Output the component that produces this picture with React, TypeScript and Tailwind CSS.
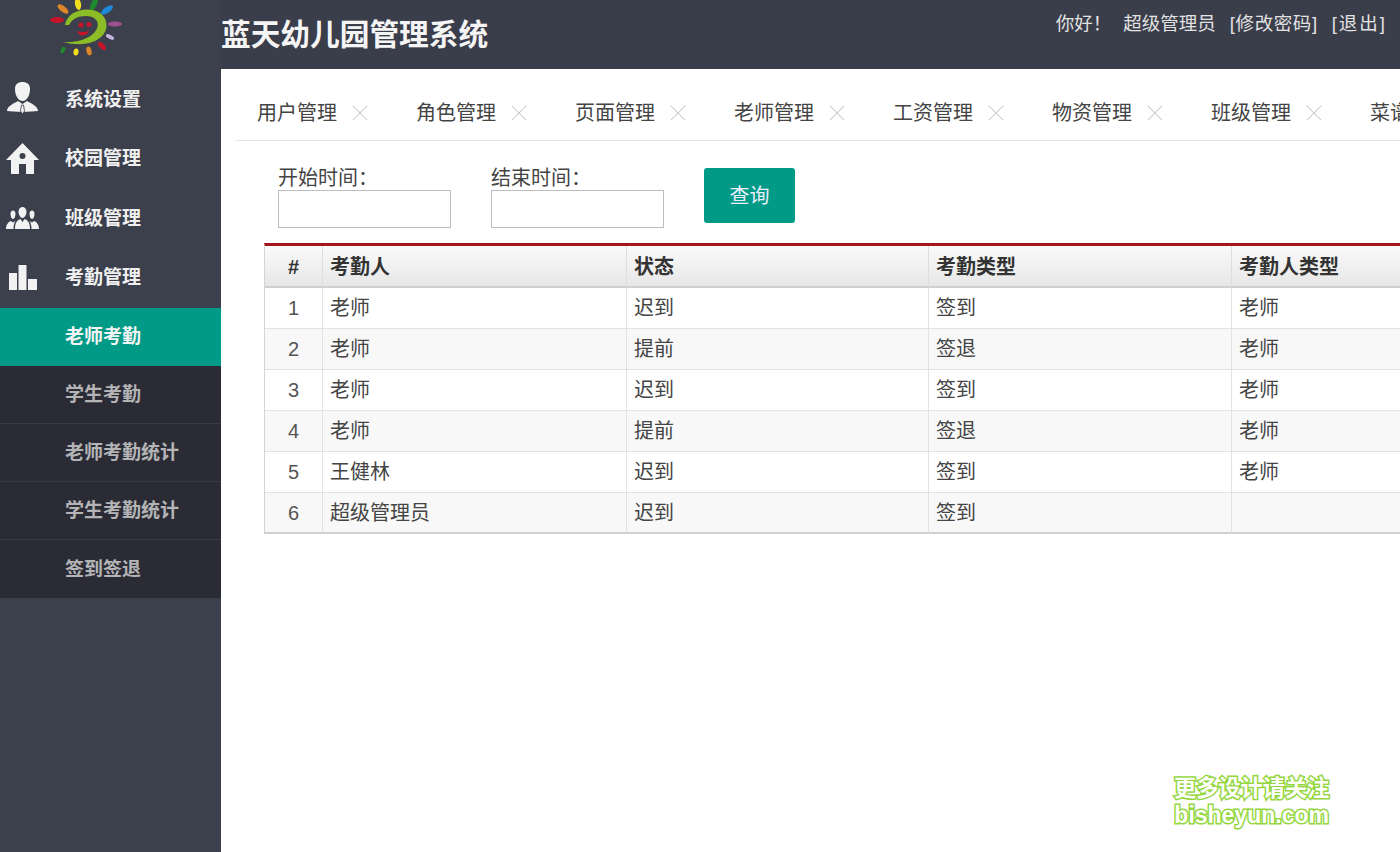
import { X } from "lucide-react";

const font = "font-['Liberation_Sans','Noto_Sans_CJK_SC',sans-serif]";

function Logo() {
  const petals = [
    { cx: 78, cy: 4, rx: 3, ry: 6, rot: -10, fill: "#f2dc1e" },
    { cx: 94, cy: 4, rx: 3, ry: 7, rot: 25, fill: "#1f8a2d" },
    { cx: 107, cy: 10, rx: 3, ry: 7, rot: 55, fill: "#1e88d6" },
    { cx: 115, cy: 24, rx: 7, ry: 2.5, rot: 0, fill: "#a0508c" },
    { cx: 110, cy: 37, rx: 4.5, ry: 2, rot: 28, fill: "#c4b5dc" },
    { cx: 102, cy: 46, rx: 5, ry: 2.5, rot: 48, fill: "#c8142a" },
    { cx: 89, cy: 51, rx: 2.5, ry: 4.5, rot: -15, fill: "#e0862a" },
    { cx: 76, cy: 52, rx: 2.5, ry: 3.5, rot: 10, fill: "#f2dc1e" },
    { cx: 63, cy: 50, rx: 2, ry: 3.5, rot: 28, fill: "#1f8a2d" },
    { cx: 57, cy: 20, rx: 7, ry: 3, rot: 0, fill: "#c8142a" },
    { cx: 63, cy: 9, rx: 3, ry: 6.5, rot: -52, fill: "#e0862a" },
  ];
  return (
    <svg width="221" height="69" viewBox="0 0 221 69" className="block">
      {petals.map((p, i) => (
        <ellipse
          key={i}
          cx={p.cx}
          cy={p.cy}
          rx={p.rx}
          ry={p.ry}
          fill={p.fill}
          transform={`rotate(${p.rot} ${p.cx} ${p.cy})`}
        />
      ))}
      <path
        d="M65 25C67 14 78 9 88 9.500C100 10 107 17 106.500 26C106 38 90 49 63 42C78 43 94 38 97.500 27C99 20 94 16 86 16C78 16 72 19 69 25Z"
        fill="#8cbc26"
      />
      <circle cx="81" cy="25" r="2.5" fill="#c8142a" />
      <circle cx="89" cy="24.5" r="2.5" fill="#c8142a" />
      <path d="M77 31C81 32.500 85 32.500 89 30.500C87 37 79 37 77 31Z" fill="#c8142a" />
    </svg>
  );
}

function UserTieIcon() {
  return (
    <svg width="31" height="33" viewBox="0 0 31 33" fill="#f2f2f2">
      <path d="M8 7C8 2 11 0 15.500 0C20 0 23 2 23 7C23 13 20 19 15.500 19C11 19 8 13 8 7Z" />
      <path d="M0 29C0 25 5 22 11 19L15.500 22L20 19C26 22 31 25 31 29C24 30 7 30 0 29Z" />
      <path d="M14.500 23L13.500 29L15.500 32L17.500 29L16.500 23Z" stroke="#3c3f4c" strokeWidth="0.8" />
    </svg>
  );
}

function HomeIcon() {
  return (
    <svg width="33" height="31" viewBox="0 0 33 31" fill="#f2f2f2">
      <path fillRule="evenodd" d="M16.500 0L33 17H28V31H20V21H13V31H5V17H0ZM16.500 10A3 3 0 1 0 16.500 16A3 3 0 1 0 16.500 10Z" />
    </svg>
  );
}

function GroupIcon() {
  return (
    <svg width="33" height="22" viewBox="0 0 33 22" fill="#f2f2f2">
      <path d="M12.500 4.500C12.500 2 14.500 0 16.500 0C18.500 0 20.500 2 20.500 4.500C20.500 8 18.500 11 16.500 11C14.500 11 12.500 8 12.500 4.500Z" />
      <path d="M9 22C9 16 11 13 14.500 12L16.500 15L18.500 12C22 13 24 16 24 22Z" />
      <path d="M4.500 7C4.500 5 5.500 3.500 7 3.500C8.500 3.500 9.500 5 9.500 7C9.500 9.500 8.500 12 7 12C5.500 12 4.500 9.500 4.500 7Z" />
      <path d="M0 22C0 18 2 15 5 14L7 15.500L9.500 14C8 16 7.500 19 7.500 22Z" />
      <path d="M23.500 7C23.500 5 24.500 3.500 26 3.500C27.500 3.500 28.500 5 28.500 7C28.500 9.500 27.500 12 26 12C24.500 12 23.500 9.500 23.500 7Z" />
      <path d="M33 22C33 18 31 15 28 14L26 15.500L23.500 14C25 16 25.500 19 25.500 22Z" />
    </svg>
  );
}

function BarsIcon() {
  return (
    <svg width="28" height="25" viewBox="0 0 28 25" fill="#f2f2f2">
      <rect x="0" y="8" width="8" height="17" />
      <rect x="9.500" y="0" width="8" height="25" />
      <rect x="19" y="14" width="9" height="11" />
    </svg>
  );
}

const topMenu = [
  { label: "系统设置", icon: <UserTieIcon /> },
  { label: "校园管理", icon: <HomeIcon /> },
  { label: "班级管理", icon: <GroupIcon /> },
  { label: "考勤管理", icon: <BarsIcon /> },
];

const subMenu = ["老师考勤", "学生考勤", "老师考勤统计", "学生考勤统计", "签到签退"];

const tabs = ["用户管理", "角色管理", "页面管理", "老师管理", "工资管理", "物资管理", "班级管理", "菜谱管理"];

const rows = [
  ["1", "老师", "迟到", "签到", "老师"],
  ["2", "老师", "提前", "签退", "老师"],
  ["3", "老师", "迟到", "签到", "老师"],
  ["4", "老师", "提前", "签退", "老师"],
  ["5", "王健林", "迟到", "签到", "老师"],
  ["6", "超级管理员", "迟到", "签到", ""],
];

const headers = ["考勤人", "状态", "考勤类型", "考勤人类型"];

function Sidebar() {
  return (
    <aside className="w-[221px] shrink-0 bg-[#3c3f4c]">
      <Logo />
      <div className="mb-px">
        {topMenu.map((item) => (
          <div key={item.label} className="flex h-[59.5px] items-center text-[19px] font-bold text-[#f0f0f0]">
            <div className="flex w-[65px] shrink-0 justify-center pr-[20px]">{item.icon}</div>
            <span className="pt-[2px]">{item.label}</span>
          </div>
        ))}
      </div>
      <div className="bg-[#2a2b35]">
        {subMenu.map((label, i) => (
          <div
            key={label}
            className={
              i === 0
                ? "flex h-[58px] items-center bg-[#019a87] pl-[65px] text-[19px] font-bold text-[#f4f4f4]"
                : "flex h-[58px] items-center border-b border-[#383a46] pt-[2px] pl-[65px] text-[19px] font-bold text-[#b4b4b6] last:border-b-0"
            }
          >
            {label}
          </div>
        ))}
      </div>
    </aside>
  );
}

function Header() {
  return (
    <header className="flex h-[69px] shrink-0 items-start justify-between bg-[#3a3d4a]">
      <h1 className="mt-[16px] text-[29.700px] leading-[38px] font-bold text-[#f5f5f5]">蓝天幼儿园管理系统</h1>
      <div className="mt-[11px] flex gap-[14px] pr-[13px] text-[18.500px] leading-[26px] text-[#e2e2e2]">
        <span className="-mr-[2px]">你好！</span>
        <span>超级管理员</span>
        <span className="tracking-[0.6px]">[修改密码]</span>
        <span className="tracking-[2px]">[退出]</span>
      </div>
    </header>
  );
}

function Tabs() {
  return (
    <div className="ml-[15px] flex h-[72px] shrink-0 items-center gap-[49px] overflow-hidden border-b border-[#e4e4e4] pt-[16px] pl-[21px]">
      {tabs.map((t) => (
        <div key={t} className="flex shrink-0 items-center gap-[16px] text-[20px] text-[#444]">
          <span className="whitespace-nowrap">{t}</span>
          <X size={28} strokeWidth={0.9} className="-mx-[7px] text-[#c6c6c6]" />
        </div>
      ))}
    </div>
  );
}

function Filter() {
  return (
    <div className="ml-[57px] flex h-[102px] shrink-0 items-start gap-[40px] pt-[27px] text-[#444]">
      <label className="block w-[173px] text-[20px] leading-[22px]">
        <span className="relative -top-px">开始时间：</span>
        <input className="block h-[38px] w-[173px] border border-[#bdbdbd] bg-white" />
      </label>
      <label className="block w-[173px] text-[20px] leading-[22px]">
        <span className="relative -top-px">结束时间：</span>
        <input className="block h-[38px] w-[173px] border border-[#bdbdbd] bg-white" />
      </label>
      <button className="h-[55px] w-[91px] rounded-[3px] bg-[#019a87] text-[20px] text-[#eef]">查询</button>
    </div>
  );
}

function DataTable() {
  return (
    <div className="ml-[43px] overflow-hidden">
      <table className="w-[1300px] table-fixed border-separate border-spacing-0 border-t-[3px] border-l border-[#a5151b] border-l-[#d4d4d4] text-[20px] text-[#444]">
        <colgroup>
          <col className="w-[58px]" />
          <col className="w-[304px]" />
          <col className="w-[302px]" />
          <col className="w-[303px]" />
          <col />
        </colgroup>
        <thead>
          <tr className="h-[42px] bg-gradient-to-b from-[#fafafa] to-[#e6e6e6] font-bold text-[#333]">
            <th className="border-r border-b-2 border-[#dedede] border-b-[#d0d0d0] pt-px text-center font-bold">#</th>
            {headers.map((h) => (
              <th key={h} className="border-r border-b-2 border-[#dedede] border-b-[#d0d0d0] pt-px pl-[7px] text-left font-bold">
                {h}
              </th>
            ))}
          </tr>
        </thead>
        <tbody>
          {rows.map((row, i) => (
            <tr key={row[0]} className={i % 2 === 1 ? "h-[41px] bg-[#f8f8f8]" : "h-[41px] bg-white"}>
              {row.map((cell, j) => (
                <td
                  key={j}
                  className={
                    (j === 0 ? "text-center text-[#555] " : "pl-[7px] ") +
                    (i === rows.length - 1
                      ? "border-r border-b-2 border-[#e2e2e2] border-b-[#d0d0d0]"
                      : "border-r border-b border-[#e2e2e2]")
                  }
                >
                  {cell}
                </td>
              ))}
            </tr>
          ))}
        </tbody>
      </table>
    </div>
  );
}

export default function App() {
  return (
    <div className={`relative flex h-[852px] w-[1400px] overflow-hidden bg-[#3a3d4a] ${font}`}>
      <Sidebar />
      <div className="flex min-w-0 flex-1 flex-col">
        <Header />
        <main className="flex min-h-0 flex-1 flex-col bg-white">
          <Tabs />
          <Filter />
          <DataTable />
        </main>
      </div>
      {/* watermark sits on top of the page */}
      <div className="absolute top-[776px] left-[1174px] text-center text-[22.200px] leading-[26px] font-bold text-white [-webkit-text-stroke:3px_#93d63e] [paint-order:stroke_fill]">
        <div className="whitespace-nowrap">更多设计请关注</div>
        <div className="whitespace-nowrap text-[23px]">bisheyun.com</div>
      </div>
    </div>
  );
}
